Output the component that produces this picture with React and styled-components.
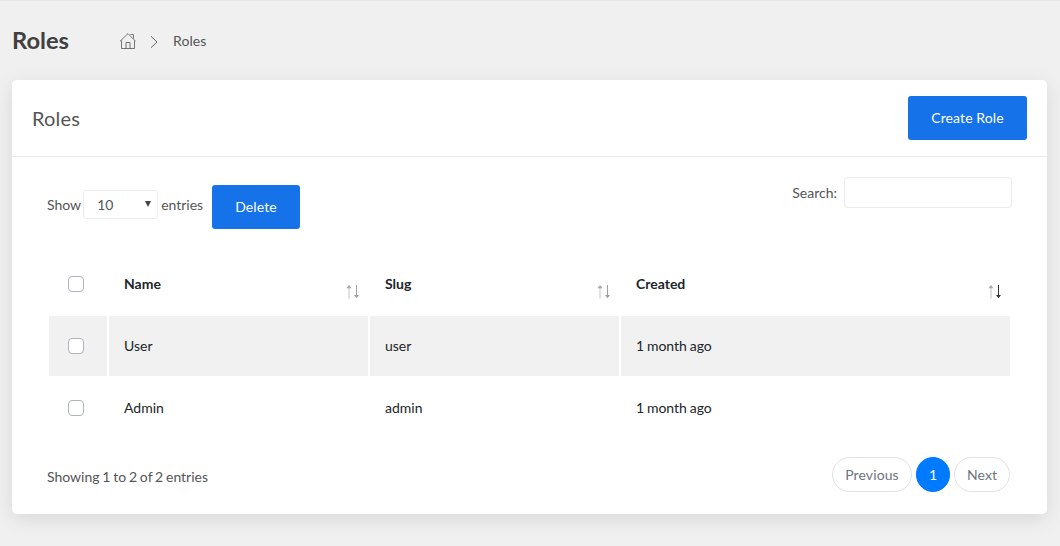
import React from "react";
import styled, { createGlobalStyle } from "styled-components";

const GlobalStyle = createGlobalStyle`
  * { box-sizing: border-box; }
  body {
    margin: 0;
    height: 546px;
    overflow: hidden;
    background: #f0f0f0;
    border-top: 1px solid #e6e6e6;
    color: #464855;
    font-family: Lato, "Liberation Sans", sans-serif;
    font-size: 14px;
    line-height: 20px;
  }
`;

const Page = styled.main`
  padding: 0 13px 0 12px;
`;

const PageHeader = styled.header`
  display: flex;
  align-items: center;
  height: 79px;
`;

const PageTitle = styled.h1`
  margin: -1px 0 0;
  width: 107px;
  font-size: 23.7px;
  font-weight: 700;
  line-height: 28px;
  color: #404040;
`;

const Breadcrumb = styled.nav`
  display: flex;
  align-items: center;
  color: #555;
  letter-spacing: 0.1px;
  svg { display: block; }
`;

const HomeIcon = styled.svg`
  width: 17px;
  height: 16px;
`;

const ChevronIcon = styled.svg`
  width: 8px;
  height: 12px;
  margin: 2px 15px 0 14px;
`;

const Card = styled.section`
  height: 434px;
  background: #fff;
  border-radius: 5px;
  box-shadow: 0 5px 20px rgba(0, 0, 0, 0.1);
`;

const CardHeader = styled.div`
  display: flex;
  align-items: center;
  justify-content: space-between;
  height: 77px;
  padding: 0 20px;
  border-bottom: 1px solid #ebebeb;
`;

const CardTitle = styled.h2`
  margin: 0;
  font-size: 20px;
  letter-spacing: 0.2px;
  font-weight: 400;
  line-height: 24px;
  color: #555;
`;

const Button = styled.button`
  width: ${(p) => p.$width}px;
  height: 44px;
  padding: 0;
  border: 0;
  border-radius: 3px;
  background: #1572e8;
  color: #fff;
  font: inherit;
  letter-spacing: 0.1px;
`;

const CardBody = styled.div`
  padding: 20px 35px 0;
`;

const Toolbar = styled.div`
  display: flex;
  justify-content: space-between;
  align-items: flex-start;
  height: 73px;
  color: #555;
`;

const LengthControl = styled.div`
  display: flex;
  align-items: center;
  padding-top: 8px;
`;

const LengthLabel = styled.label`
  display: flex;
  align-items: center;
  gap: 2px;
  width: 157px;
  margin: -4px 8px 0 0;
`;

const SelectBox = styled.span`
  display: flex;
  align-items: center;
  justify-content: space-between;
  width: 75px;
  height: 29px;
  margin: -1px 1px 0 0;
  padding: 1px 6px 0 13px;
  border: 1px solid #ebedf2;
  border-radius: 3px;
`;

const Caret = styled.svg`
  width: 6px;
  height: 6px;
  margin-top: -3px;
`;

const SearchLabel = styled.label`
  display: flex;
  align-items: center;
  gap: 7px;
`;

const SearchInput = styled.input`
  width: 168px;
  height: 31px;
  padding: 0 10px;
  border: 1px solid #ebebeb;
  border-radius: 3px;
  font: inherit;
`;

const Table = styled.table`
  width: 965px;
  border-collapse: separate;
  border-spacing: 2px;
  table-layout: fixed;
  color: #212529;
`;

const HeadCell = styled.th`
  height: 62px;
  padding: 2px 8px 0 15px;
  font-weight: 700;
  text-align: left;
`;

const HeadContent = styled.div`
  display: flex;
  align-items: center;
  justify-content: space-between;
`;

const Cell = styled.td`
  height: 60px;
  padding: 0 15px;
  background: ${(p) => (p.$striped ? "#f1f1f1" : "transparent")};
  word-spacing: -0.8px;
`;

const CheckHeadCell = styled(HeadCell)`
  padding: 2px 19px 0;
`;

const CheckCell = styled(Cell)`
  padding: 0 19px;
`;

const Checkbox = styled.input.attrs({ type: "checkbox" })`
  appearance: none;
  display: block;
  width: 16px;
  height: 16px;
  margin: 0;
  border: 1px solid #adb5bd;
  border-radius: 4px;
  background: #fff;
`;

const SortIcon = styled.svg`
  width: 14px;
  height: 14px;
  margin: 15px 0 -1px;
`;

const Footer = styled.div`
  display: flex;
  justify-content: space-between;
  align-items: flex-start;
  padding: 17px 2px 0 0;
  color: #555;
`;

const Info = styled.div`
  padding-top: 10px;
  word-spacing: -0.8px;
`;

const Pager = styled.nav`
  display: flex;
  gap: 4px;
`;

const PageButton = styled.button`
  width: ${(p) => p.$width}px;
  height: 35px;
  padding: 0;
  border: 1px solid ${(p) => (p.$active ? "#007bff" : "#dee2e6")};
  border-radius: 18px;
  background: ${(p) => (p.$active ? "#007bff" : "#fff")};
  color: ${(p) => (p.$active ? "#fff" : "#6c757d")};
  font: inherit;
  letter-spacing: 0.1px;
`;

const columns = [
  { label: "Name", width: 259 },
  { label: "Slug", width: 249 },
  { label: "Created", width: 389, sorted: true },
];

const rows = [
  ["User", "user", "1 month ago"],
  ["Admin", "admin", "1 month ago"],
];

function Sort({ sorted }) {
  const down = sorted ? "#333" : "#a0a0a0";
  return (
    <SortIcon viewBox="0 0 14 14">
      <path d="M3 1v12.5" stroke="#c4c4c4" />
      <path d="M3 0l2.5 3.2h-5z" fill="#a8a8a8" />
      <path d="M10.5 0v12" stroke={down} />
      <path d="M10.5 13.2L13 10H8z" fill={down} />
    </SortIcon>
  );
}

export default function App() {
  return (
    <>
      <GlobalStyle />
      <Page>
        <PageHeader>
          <PageTitle>Roles</PageTitle>
          <Breadcrumb>
            <HomeIcon viewBox="0 0 17 16" fill="none" stroke="#555">
              <path d="M1 8.3L9 .6l7.6 7.7M2.5 7.5v8h13v-8M7 15.5v-6h4v6M11.5 1.5h3v4" strokeWidth=".8" />
            </HomeIcon>
            <ChevronIcon viewBox="0 0 8 12" fill="none" stroke="#555">
              <path d="M1 .3L7 6l-6 5.7" strokeWidth=".9" />
            </ChevronIcon>
            <span>Roles</span>
          </Breadcrumb>
        </PageHeader>
        <Card>
          <CardHeader>
            <CardTitle>Roles</CardTitle>
            <Button $width={119}>Create Role</Button>
          </CardHeader>
          <CardBody>
            <Toolbar>
              <LengthControl>
                <LengthLabel>
                  Show
                  <SelectBox>
                    10
                    <Caret viewBox="0 0 6 6">
                      <path d="M0 0h6L3 6z" fill="#444" />
                    </Caret>
                  </SelectBox>
                  entries
                </LengthLabel>
                <Button $width={88}>Delete</Button>
              </LengthControl>
              <SearchLabel>
                Search:
                <SearchInput />
              </SearchLabel>
            </Toolbar>
            <Table>
              <colgroup>
                <col width={58} />
                {columns.map((c) => (
                  <col key={c.label} width={c.width} />
                ))}
              </colgroup>
              <thead>
                <tr>
                  <CheckHeadCell>
                    <Checkbox />
                  </CheckHeadCell>
                  {columns.map((c) => (
                    <HeadCell key={c.label}>
                      <HeadContent>
                        {c.label}
                        <Sort sorted={c.sorted} />
                      </HeadContent>
                    </HeadCell>
                  ))}
                </tr>
              </thead>
              <tbody>
                {rows.map((row, i) => (
                  <tr key={row[0]}>
                    <CheckCell $striped={i % 2 === 0}>
                      <Checkbox />
                    </CheckCell>
                    {row.map((value, j) => (
                      <Cell key={j} $striped={i % 2 === 0}>
                        {value}
                      </Cell>
                    ))}
                  </tr>
                ))}
              </tbody>
            </Table>
            <Footer>
              <Info>Showing 1 to 2 of 2 entries</Info>
              <Pager>
                <PageButton $width={80}>Previous</PageButton>
                <PageButton $width={34} $active>1</PageButton>
                <PageButton $width={56}>Next</PageButton>
              </Pager>
            </Footer>
          </CardBody>
        </Card>
      </Page>
    </>
  );
}
